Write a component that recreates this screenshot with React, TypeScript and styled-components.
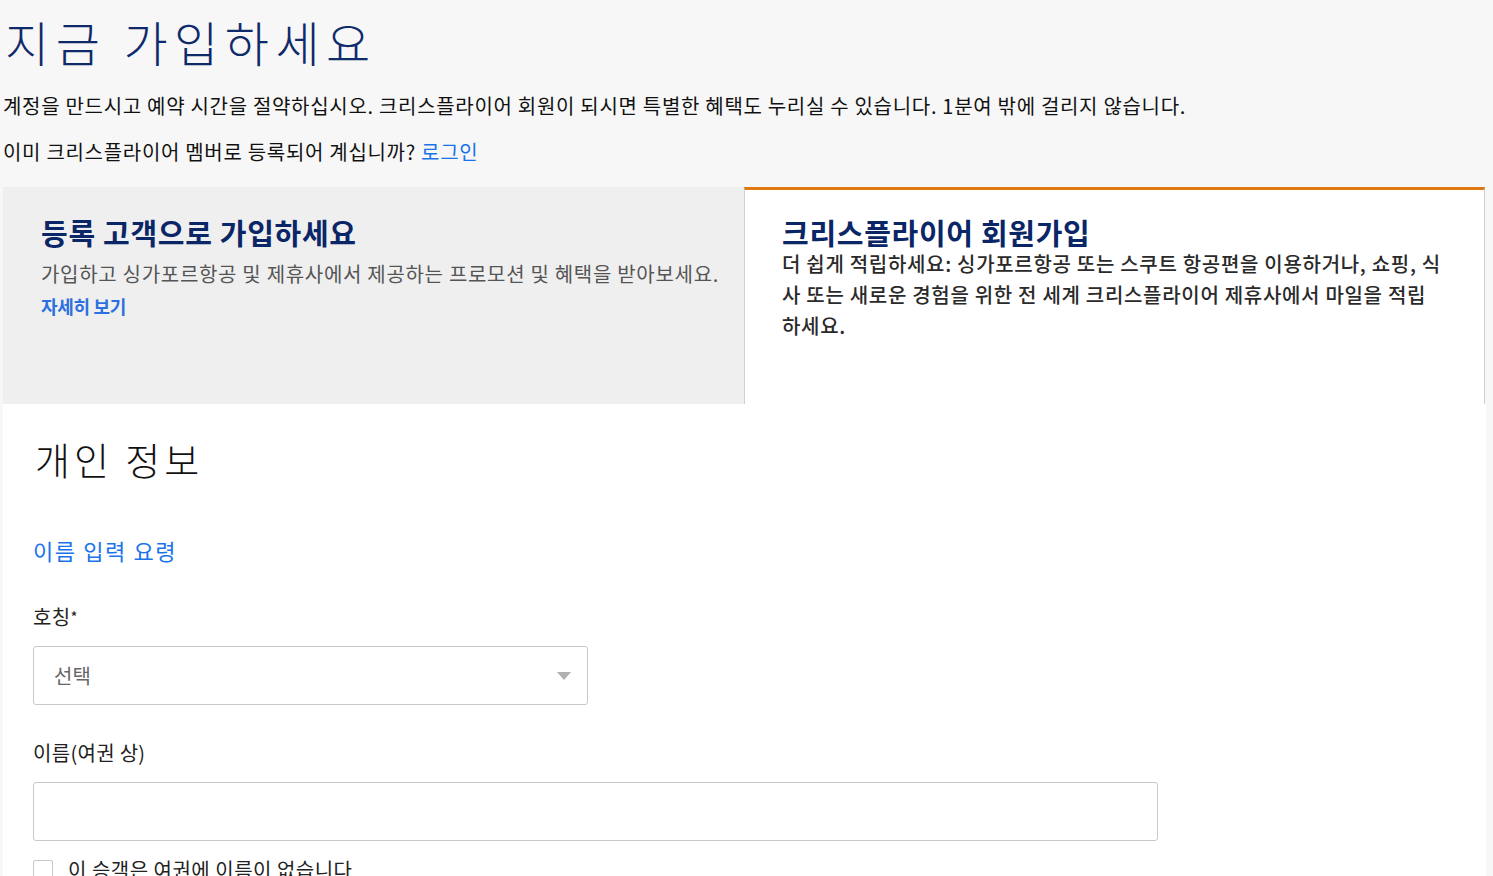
import styled, { createGlobalStyle } from 'styled-components';

const GlobalStyle = createGlobalStyle`
  html, body {
    margin: 0;
    background: #f7f7f7;
  }
  body {
    font-family: 'Noto Sans CJK KR', 'Noto Sans', sans-serif;
    color: #111;
  }
`;

function App() {
  return (
    <>
      <GlobalStyle />
      <Page>
        <Title>지금 가입하세요</Title>
        <Intro>
          계정을 만드시고 예약 시간을 절약하십시오. 크리스플라이어 회원이 되시면 특별한 혜택도 누리실 수
          있습니다. 1분여 밖에 걸리지 않습니다.
        </Intro>
        <Intro>
          이미 크리스플라이어 멤버로 등록되어 계십니까? <TextLink href="#">로그인</TextLink>
        </Intro>

        <Tabs>
          <Tab>
            <TabTitle>등록 고객으로 가입하세요</TabTitle>
            <TabText>가입하고 싱가포르항공 및 제휴사에서 제공하는 프로모션 및 혜택을 받아보세요.</TabText>
            <MoreLink href="#">자세히 보기</MoreLink>
          </Tab>
          <Tab $active>
            <TabTitle>크리스플라이어 회원가입</TabTitle>
            <TabText $active>
              더 쉽게 적립하세요: 싱가포르항공 또는 스쿠트 항공편을 이용하거나, 쇼핑, 식사 또는 새로운 경험을
              위한 전 세계 크리스플라이어 제휴사에서 마일을 적립하세요.
            </TabText>
          </Tab>
        </Tabs>

        <FormPanel>
          <SectionTitle>개인 정보</SectionTitle>
          <HelpLink href="#">이름 입력 요령</HelpLink>

          <Field>
            <Label>
              호칭<Req>*</Req>
            </Label>
            <SelectBox>
              <span>선택</span>
              <Caret />
            </SelectBox>
          </Field>

          <Field>
            <Label>이름(여권 상)</Label>
            <TextInput />
          </Field>

          <CheckRow>
            <CheckBox />
            <span>이 승객은 여권에 이름이 없습니다</span>
          </CheckRow>
        </FormPanel>
      </Page>
    </>
  );
}

export default App;

const Page = styled.div`
  padding: 0 8px 0 3px;
`;

const Title = styled.h1`
  margin: 0;
  padding: 10px 0 0 2px;
  font-family: 'Noto Sans CJK KR', serif;
  font-size: 48px;
  font-weight: 300;
  line-height: 62px;
  letter-spacing: 6.5px;
  color: #0f2a6b;
`;

const Intro = styled.p`
  margin: 19px 0 0;
  font-size: 20px;
  line-height: 30px;
  letter-spacing: 0.7px;
  color: #111;

  & + & {
    margin-top: 16px;
  }
`;

const TextLink = styled.a`
  color: #1a73e8;
  text-decoration: none;
`;

const Tabs = styled.div`
  display: grid;
  grid-template-columns: 741px 741px;
  margin-top: 20px;
  height: 217px;
`;

const Tab = styled.div<{ $active?: boolean }>`
  padding: ${(p) => (p.$active ? '24px 40px 0 37px' : '27px 18px 0 38px')};
  background: ${(p) => (p.$active ? '#fff' : '#efefef')};
  border-top: ${(p) => (p.$active ? '3px solid #e07812' : 'none')};
  border-left: ${(p) => (p.$active ? '1px solid #cfcfcf' : 'none')};
  border-right: ${(p) => (p.$active ? '1px solid #cfcfcf' : 'none')};
`;

const TabTitle = styled.h2`
  margin: 0;
  font-size: 29px;
  font-weight: 700;
  line-height: 36px;
  letter-spacing: 0.7px;
  color: #0a2667;
`;

const TabText = styled.p<{ $active?: boolean }>`
  margin: ${(p) => (p.$active ? '-2px 0 0' : '8px 0 0')};
  font-size: 20px;
  font-weight: ${(p) => (p.$active ? 500 : 400)};
  line-height: 31px;
  letter-spacing: 0.7px;
  color: ${(p) => (p.$active ? '#2a2a2a' : '#555')};
`;

const MoreLink = styled.a`
  display: inline-block;
  margin-top: 4px;
  font-size: 18px;
  font-weight: 700;
  letter-spacing: -0.3px;
  color: #2b6fe0;
  text-decoration: none;
`;

const FormPanel = styled.div`
  background: #fff;
  margin-right: -1px;
  padding: 28px 30px 40px 30px;
`;

const SectionTitle = styled.h2`
  margin: 0 0 0 2px;
  font-family: 'Noto Sans CJK KR', serif;
  font-size: 38px;
  font-weight: 300;
  line-height: 54px;
  letter-spacing: 4px;
  color: #111;
`;

const HelpLink = styled.a`
  display: inline-block;
  margin: 48px 0 3px;
  font-size: 22px;
  letter-spacing: 1.6px;
  color: #1a73e8;
  text-decoration: none;
`;

const Field = styled.div`
  margin-top: 33px;
`;

const Label = styled.div`
  font-size: 20px;
  line-height: 30px;
  letter-spacing: 0.3px;
  color: #222;
`;

const Req = styled.span`
  font-size: 15px;
  vertical-align: top;
`;

const SelectBox = styled.div`
  box-sizing: border-box;
  display: flex;
  align-items: center;
  justify-content: space-between;
  width: 555px;
  height: 59px;
  margin-top: 14px;
  padding: 0 16px 0 20px;
  border: 1px solid #c8c8c8;
  border-radius: 3px;
  font-size: 20px;
  color: #666;
`;

const Caret = styled.span`
  width: 0;
  height: 0;
  border-left: 7px solid transparent;
  border-right: 7px solid transparent;
  border-top: 8px solid #b0b0b0;
`;

const TextInput = styled.div`
  box-sizing: border-box;
  width: 1125px;
  height: 59px;
  margin-top: 14px;
  border: 1px solid #c8c8c8;
  border-radius: 3px;
`;

const CheckRow = styled.div`
  display: flex;
  align-items: center;
  gap: 15px;
  margin-top: 14px;
  font-size: 20px;
  letter-spacing: 0.5px;
  color: #222;
`;

const CheckBox = styled.span`
  box-sizing: border-box;
  width: 20px;
  height: 20px;
  border: 1px solid #c8c8c8;
  border-radius: 2px;
`;
